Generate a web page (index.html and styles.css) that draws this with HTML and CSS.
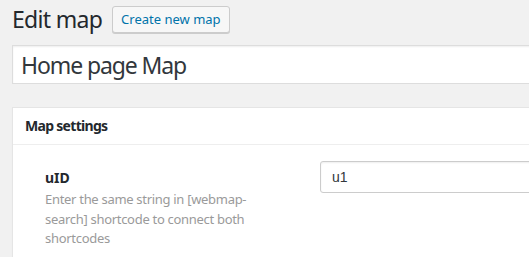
FILE: index.html
```html
<!DOCTYPE html>
<html>
<head>
<meta charset="utf-8">
<link rel="stylesheet" href="styles.css">
</head>
<body>
<div class="wrap">
  <div class="head">
    <h1 class="title">Edit map</h1>
    <a class="btn">Create new map</a>
  </div>
  <div class="titlebox">
    <input class="title-input" type="text" value="Home page Map">
  </div>
  <div class="postbox">
    <div class="postbox-head">Map settings</div>
    <div class="postbox-body">
      <div class="field">
        <div class="field-label">
          <div class="label">uID</div>
          <div class="desc">Enter the same string in [webmap-search] shortcode to connect both shortcodes</div>
        </div>
        <div class="field-input">
          <input class="text-input" type="text" value="u1">
        </div>
      </div>
    </div>
  </div>
</div>
</body>
</html>
```
FILE: styles.css
```css
html, body {
  margin: 0;
  padding: 0;
  background: #f1f1f1;
  overflow: hidden;
}
body {
  font-family: "Noto Sans", "Open Sans", sans-serif;
  color: #23282d;
}
.wrap {
  width: 700px;
  padding: 5px 0 0 12px;
}
.head {
  display: flex;
  align-items: center;
  gap: 10px;
  height: 28px;
}
.title {
  margin: 0;
  font-size: 23px;
  font-weight: 400;
  line-height: 28px;
  letter-spacing: -0.7px;
}
.btn {
  display: inline-block;
  box-sizing: border-box;
  height: 27px;
  line-height: 25px;
  padding: 0 8px;
  border: 1px solid #cccccc;
  border-radius: 3px;
  background: #f7f7f7;
  color: #0073aa;
  font-size: 13px;
  box-shadow: 0 1px 0 #cccccc;
}
.titlebox {
  margin-top: 12px;
}
.title-input {
  display: block;
  box-sizing: border-box;
  width: 100%;
  height: 39px;
  border: 1px solid #dddddd;
  background: #ffffff;
  padding: 0 8px;
  font-family: "Noto Sans", "Open Sans", sans-serif;
  font-size: 23px;
  letter-spacing: -1.1px;
  color: #32373c;
  box-shadow: inset 0 1px 2px rgba(0,0,0,.07);
  outline: none;
}
.postbox {
  margin-top: 23px;
  background: #ffffff;
  border: 1px solid #e5e5e5;
  box-shadow: 0 1px 1px rgba(0,0,0,.04);
}
.postbox-head {
  font-size: 14px;
  font-weight: 700;
  line-height: 20px;
  letter-spacing: -0.7px;
  padding: 8px 12px;
  border-bottom: 1px solid #eeeeee;
}
.postbox-body {
  padding: 3px 12px 40px 32px;
}
.field {
  display: flex;
}
.field-label {
  width: 275px;
  flex: none;
  padding-top: 20px;
}
.label {
  font-size: 14px;
  font-weight: 700;
  line-height: 20px;
}
.desc {
  margin-top: 2px;
  width: 230px;
  font-size: 13px;
  line-height: 19.5px;
  letter-spacing: -0.3px;
  color: #9a9a9a;
}
.field-input {
  padding-top: 13px;
  flex: 1;
}
.text-input {
  display: block;
  box-sizing: border-box;
  width: 100%;
  height: 32px;
  border: 1px solid #cccccc;
  border-radius: 3px;
  padding: 0 11px;
  font-family: "Liberation Sans", Arial, sans-serif;
  font-size: 14px;
  color: #32373c;
  box-shadow: inset 0 1px 2px rgba(0,0,0,.07);
  outline: none;
}
```
